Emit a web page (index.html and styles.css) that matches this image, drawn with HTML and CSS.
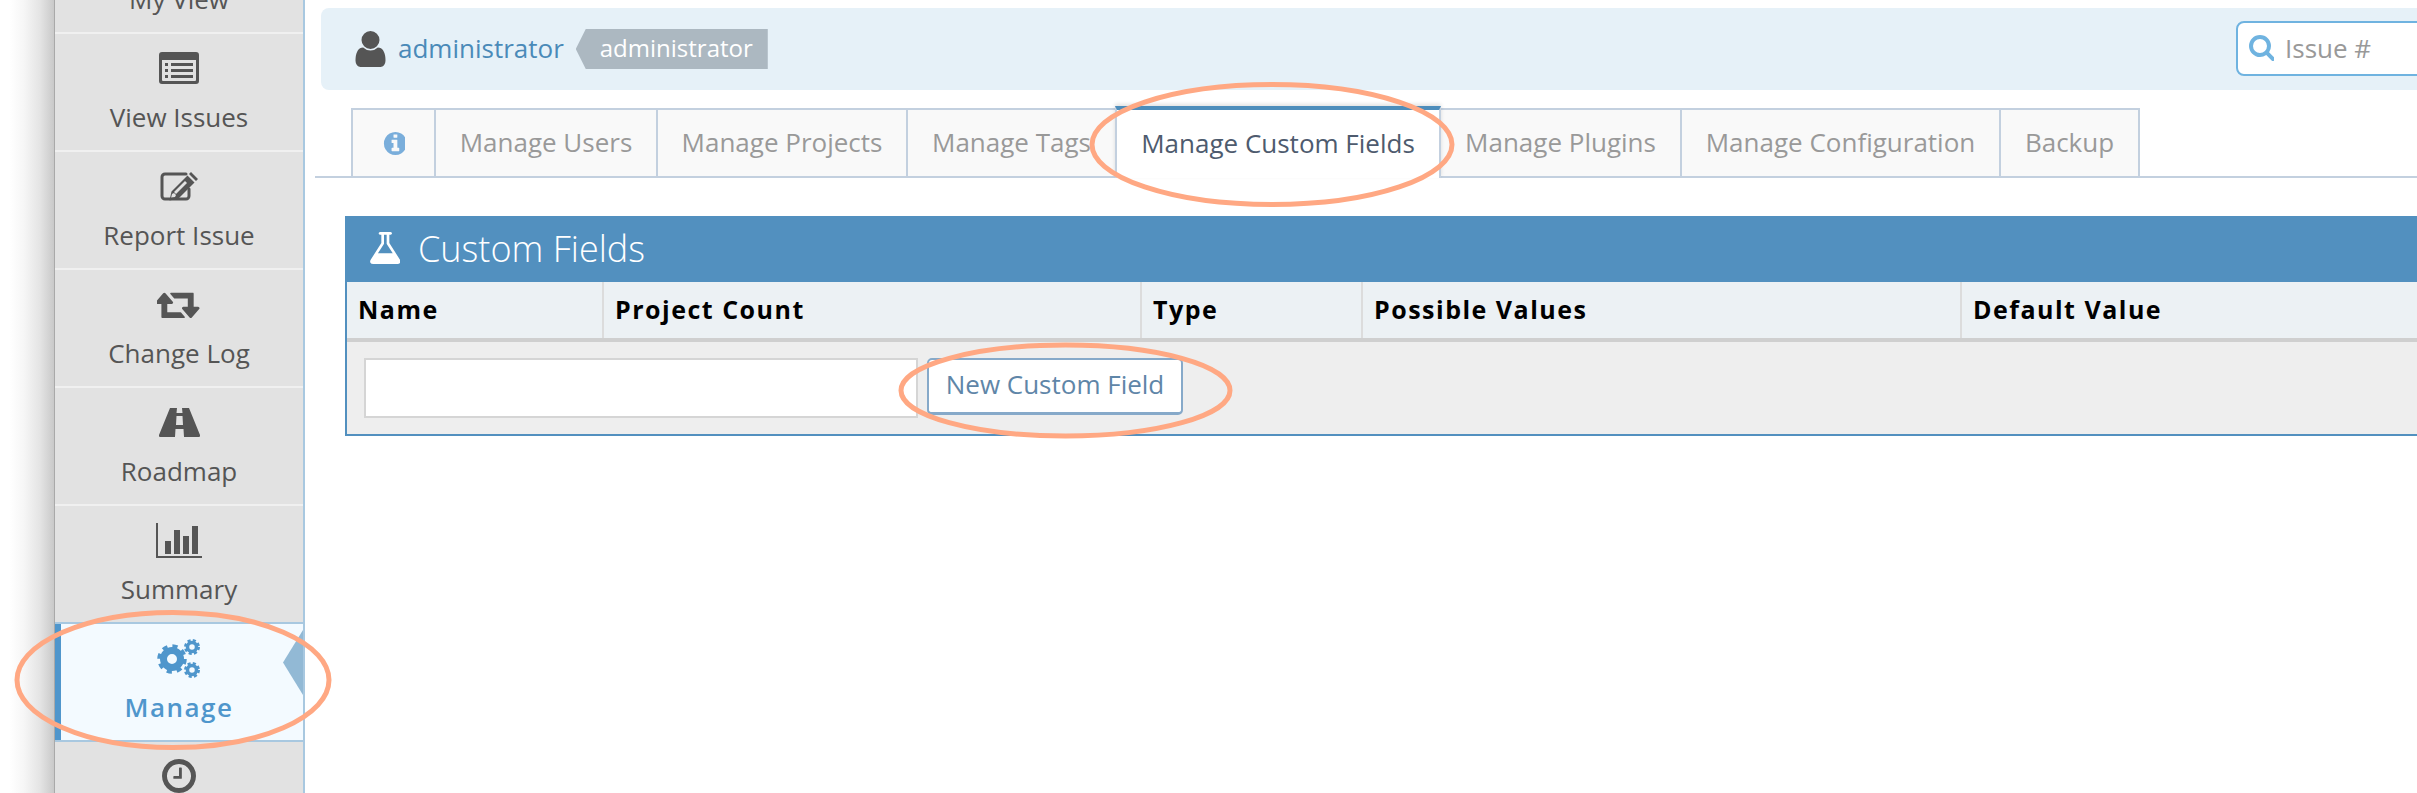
FILE: index.html
```html
<!DOCTYPE html>
<html lang="en">
<head>
<meta charset="utf-8">
<title>Custom Fields</title>
<link rel="stylesheet" href="styles.css">
</head>
<body>
<div class="page">
  <div class="gutter"></div>
  <nav class="sidebar">
    <a class="item"><span class="ico"></span><span class="label">My View</span></a>
    <a class="item"><span class="ico"><svg width="40" height="32" viewBox="0 0 40 32"><path fill-rule="evenodd" d="M3 0h34a3 3 0 0 1 3 3v26a3 3 0 0 1-3 3H3a3 3 0 0 1-3-3V3a3 3 0 0 1 3-3zM3 8v20a1 1 0 0 0 1 1h32a1 1 0 0 0 1-1V8z" fill="#555"/><path d="M6 11h3v3H6zM12 11h22v3H12zM6 17h3v3H6zM12 17h22v3H12zM6 23h3v3H6zM12 23h22v3H12z" fill="#555"/></svg></span><span class="label">View Issues</span></a>
    <a class="item"><span class="ico"><svg width="40" height="32" viewBox="0 0 40 32"><path d="M30 19v7a3 3 0 0 1-3 3H6a3 3 0 0 1-3-3V7a3 3 0 0 1 3-3h21" fill="none" stroke="#555" stroke-width="3" stroke-linecap="round"/><path d="M32 2l7 7-2 2-7-7zM28.500 5.500l7 7-16 16-9 2 2-9zM15 23l-2 1-1 4 4-1 1-2z" fill="#555"/><path d="M26 11l2 2-11 11-2-2z" fill="#e2e2e2"/></svg></span><span class="label">Report Issue</span></a>
    <a class="item"><span class="ico"><svg width="44" height="27" viewBox="0 300 1920 1240" preserveAspectRatio="none"><path fill="#555" d="M1216 1504q0 13-9.500 22.500t-22.500 9.500h-960q-8 0-13.500-2t-9-7-5.500-8-3-11.500-1-11.500v-600h-192q-26 0-45-19t-19-45q0-24 15-41l320-384q19-22 49-22t49 22l320 384q15 17 15 41 0 26-19 45t-45 19h-192v384h576q16 0 25 11l160 192q7 10 7 21zm640-416q0 24-15 41l-320 384q-20 23-49 23t-49-23l-320-384q-15-17-15-41 0-26 19-45t45-19h192v-384h-576q-16 0-25-12l-160-192q-7-9-7-20 0-13 9.500-22.500t22.500-9.500h960q8 0 13.500 2t9 7 5.500 8 3 11.500 1 11.500v600h192q26 0 45 19t19 45z"/></svg></span><span class="label">Change Log</span></a>
    <a class="item"><span class="ico"><svg width="41" height="29" viewBox="0 0 41 29"><path fill="#555" fill-rule="evenodd" d="M11 0h19l11 27a1.500 1.500 0 0 1-1.500 2H1.500A1.500 1.500 0 0 1 0 27zM18 0l-.5 5h6l-.5-5zM17.500 8l-.5 9h7l-.5-9zM16.500 21l-.5 8h9l-.5-8z"/></svg></span><span class="label">Roadmap</span></a>
    <a class="item"><span class="ico"><svg width="46" height="35" viewBox="0 0 46 35"><path fill="#555" d="M0 0h2v33h44v2H0zM9 18h6v13H9zM18 7h6v24h-6zM27 13h6v18h-6zM36 3h6v28h-6z"/></svg></span><span class="label">Summary</span></a>
    <a class="item active"><span class="ico"><svg width="44" height="41" viewBox="0 0 44 41"><g fill="none" stroke="#4f96cc"><circle cx="15" cy="21" r="8.500" stroke-width="7"/><circle cx="15" cy="21" r="12.500" stroke-width="4.500" stroke-dasharray="5 4.820"/><circle cx="35" cy="9" r="4.500" stroke-width="3.500"/><circle cx="35" cy="9" r="6.500" stroke-width="3" stroke-dasharray="3 2.100"/><circle cx="35" cy="32" r="4.500" stroke-width="3.500"/><circle cx="35" cy="32" r="6.500" stroke-width="3" stroke-dasharray="3 2.100"/></g></svg></span><span class="label">Manage</span></a>
    <a class="item"><span class="ico"><svg width="34" height="34" viewBox="0 128 1536 1536"><path fill="#555" d="M896 544v448q0 14-9 23t-23 9h-320q-14 0-23-9t-9-23v-64q0-14 9-23t23-9h224v-352q0-14 9-23t23-9h64q14 0 23 9t9 23zm416 352q0-148-73-273t-198-198-273-73-273 73-198 198-73 273 73 273 198 198 273 73 273-73 198-198 73-273zm224 0q0 209-103 385.500t-279.500 279.500-385.500 103-385.500-103-279.500-279.500-103-385.500 103-385.500 279.500-279.500 385.500-103 385.500 103 279.500 279.500 103 385.500z"/></svg></span><span class="label">Timeline</span></a>
  </nav>
  <main class="main">
    <header class="topbar">
      <svg class="user-ico" width="33" height="36" viewBox="256 128 1280 1536"><path fill="#555" d="M1536 1399q0 109-62.500 187t-150.500 78h-854q-88 0-150.500-78t-62.500-187q0-85 8.500-160.500t31.500-152 58.500-131 94-89 134.500-34.500q131 128 313 128t313-128q76 0 134.500 34.500t94 89 58.500 131 31.500 152 8.500 160.500zm-256-887q0 159-112.500 271.500t-271.500 112.500-271.500-112.500-112.500-271.500 112.500-271.500 271.500-112.500 271.500 112.500 112.500 271.500z"/></svg>
      <a class="user-name">administrator</a>
      <span class="role">administrator</span>
      <div class="search">
        <svg width="26" height="30" viewBox="0 128 1664 1664"><path fill="#6fb3e0" d="M1216 832q0-185-131.500-316.500t-316.500-131.500-316.500 131.500-131.500 316.500 131.500 316.500 316.500 131.500 316.500-131.500 131.500-316.500zm512 832q0 52-38 90t-90 38q-54 0-90-38l-343-342q-179 124-399 124-143 0-273.500-55.500t-225-150-150-225-55.500-273.500 55.500-273.500 150-225 225-150 273.500-55.500 273.500 55.500 225 150 150 225 55.500 273.500q0 220-124 399l343 343q37 37 37 90z"/></svg>
        <span class="placeholder">Issue #</span>
      </div>
    </header>
    <div class="tabs">
      <a class="tab tab-info"><svg width="23" height="23" viewBox="0 128 1536 1536"><path fill="#7aaedb" d="M1152 1376v-160q0-14-9-23t-23-9h-96v-512q0-14-9-23t-23-9h-320q-14 0-23 9t-9 23v160q0 14 9 23t23 9h96v320h-96q-14 0-23 9t-9 23v160q0 14 9 23t23 9h448q14 0 23-9t9-23zm-128-896v-160q0-14-9-23t-23-9h-192q-14 0-23 9t-9 23v160q0 14 9 23t23 9h192q14 0 23-9t9-23zm640 416q0 209-103 385.500t-279.500 279.500-385.500 103-385.500-103-279.500-279.500-103-385.500 103-385.500 279.500-279.500 385.500-103 385.500 103 279.500 279.500 103 385.500z"/></svg></a>
      <a class="tab tab-users">Manage Users</a>
      <a class="tab tab-projects">Manage Projects</a>
      <a class="tab tab-tags">Manage Tags</a>
      <a class="tab tab-fields current">Manage Custom Fields</a>
      <a class="tab tab-plugins">Manage Plugins</a>
      <a class="tab tab-config">Manage Configuration</a>
      <a class="tab tab-backup">Backup</a>
    </div>
    <section class="panel">
      <h2 class="panel-title"><svg width="32" height="32" viewBox="64 128 1536 1536"><path fill="#fff" d="M1591 1448q56 89 21.500 152.500t-140.500 63.500h-1152q-106 0-140.500-63.500t21.500-152.500l503-793v-399h-64q-26 0-45-19t-19-45 19-45 45-19h512q26 0 45 19t19 45-19 45-45 19h-64v399zm-779-725l-272 429h712l-272-429-20-31v-436h-128v436z"/></svg>Custom Fields</h2>
      <div class="thead">
        <div class="th">Name</div>
        <div class="th">Project Count</div>
        <div class="th">Type</div>
        <div class="th">Possible Values</div>
        <div class="th">Default Value</div>
      </div>
      <form class="new-row">
        <div class="field"></div>
        <button class="btn" type="button">New Custom Field</button>
      </form>
    </section>
  </main>
</div>
<svg class="marks" width="2417" height="793" viewBox="0 0 2417 793">
  <ellipse cx="173" cy="680" rx="156" ry="67.500"/>
  <ellipse cx="1272" cy="144.500" rx="180" ry="60"/>
  <ellipse cx="1065.500" cy="390.500" rx="164.500" ry="45.500"/>
</svg>
</body>
</html>
```
FILE: styles.css
```css
* { box-sizing: border-box; }
html, body { margin: 0; padding: 0; height: 793px; overflow: hidden; background: #fff; }
body { font-family: "Open Sans", "Liberation Sans", sans-serif; color: #555; position: relative; }
.page { display: flex; height: 793px; width: 2417px; overflow: hidden; }
.gutter { flex: 0 0 54px; background: linear-gradient(to right, #fff 10px, #f6f6f6 24px, #e4e4e4 40px, #c9c9c9 54px); }

.sidebar { flex: 0 0 251px; margin-top: -84px; background: #e2e2e2; border-left: 1px solid #a9a9a9; border-right: 2px solid #a8c8e0; height: 900px; }
.item { display: flex; flex-direction: column; align-items: center; height: 118px; border-bottom: 2px solid #f0f0f0; padding-top: 14px; position: relative; color: #555; }
.ico { height: 40px; display: flex; align-items: center; justify-content: center; }
.label { font-size: 26px; line-height: 33px; margin-top: 13px; }
.item.active { background: #f3faff; border-top: 2px solid #a8c8e0; border-bottom: 2px solid #a8c8e0; margin-top: -2px; height: 120px; box-shadow: inset 6px 0 0 #4f96cc; color: #4f96cc; }
.item.active .label { font-weight: 600; letter-spacing: 1.500px; }
.item.active::after { content: ""; position: absolute; right: 0; top: 6px; width: 20px; height: 65px; background: #92b9d5; clip-path: polygon(100% 0, 100% 100%, 0 50%); }

.main { flex: 1 1 auto; min-width: 0; }
.topbar { display: flex; align-items: center; height: 82px; margin: 8px -30px 0 16px; padding-left: 33px; background: #e6f1f8; border-radius: 8px 0 0 8px; }
.user-name { font-size: 26px; color: #4a8ab8; margin-left: 11px; margin-top: -2px; }
.role { margin-left: 12px; height: 40px; width: 192px; padding-left: 24px; background: #acb8c1; color: #fff; font-size: 24px; line-height: 37px; clip-path: polygon(10px 0, 100% 0, 100% 100%, 10px 100%, 0 50%); }
.search { margin-left: auto; flex: 0 0 211px; height: 55px; margin-top: -2px; display: flex; align-items: center; gap: 11px; padding-left: 10px; background: #fff; border: 2px solid #6fb3e0; border-radius: 8px 0 0 8px; }
.placeholder { font-size: 26px; color: #999; }

.tabs { display: flex; height: 70px; margin: 18px 0 0 10px; padding-left: 36px; border-bottom: 2px solid #c3d0df; }
.tab { display: flex; align-items: center; justify-content: center; height: 70px; padding-bottom: 3px; background: #f9f9f9; border: 2px solid #c3d0df; border-right-width: 0; font-size: 26px; color: #999; }
.tab:last-child { border-right-width: 2px; }
.tab-info { width: 83px; padding-bottom: 0; }
.tab-users { width: 222px; }
.tab-projects { width: 250px; }
.tab-tags { width: 209px; }
.tab-fields { width: 326px; }
.tab-plugins { width: 241px; }
.tab-config { width: 319px; }
.tab-backup { width: 141px; }
.tab.current { background: #fff; color: #4e5b6e; height: 72px; margin-top: -2px; border-top: 4px solid #4d8dbb; border-bottom: 0; border-right-width: 2px; margin-right: -2px; position: relative; box-shadow: 0 -2px 4px rgba(0,0,0,.12); }

.panel { margin: 38px 0 0 40px; border: solid #5290bf; border-width: 0 0 2px 2px; }
.panel-title { margin: 0 0 0 -2px; height: 66px; display: flex; align-items: center; gap: 18px; padding: 0 0 2px 23px; background: #5290bf; color: #fff; font-size: 36px; font-weight: 300; }
.thead { display: grid; grid-template-columns: 257px 538px 221px 599px 1fr; height: 60px; background: #ecf1f4; border-bottom: 4px solid #cfcfcf; }
.th { display: flex; align-items: center; padding: 0 0 2px 11px; font-size: 25px; font-weight: 700; letter-spacing: 1.500px; color: #000; border-right: 2px solid #dcdcdc; }
.th:last-child { border-right: 0; }
.new-row { display: flex; align-items: flex-start; height: 92px; padding: 16px 0 0 17px; background: #eee; }
.field { width: 554px; height: 60px; background: #fff; border: 2px solid #d5d5d5; }
.btn { margin-left: 9px; width: 256px; height: 57px; padding: 0 0 4px; background: #fff; border: 2px solid #86a9c9; border-bottom-width: 3px; border-radius: 5px; color: #5f86a8; font: 26px "Open Sans", sans-serif; }

.marks { position: absolute; left: 0; top: 0; pointer-events: none; }
.marks ellipse { fill: none; stroke: #ffa883; stroke-width: 5px; }
```
